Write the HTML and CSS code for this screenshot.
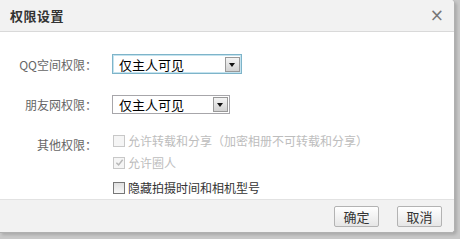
FILE: index.html
```html
<!DOCTYPE html>
<html lang="zh">
<head>
<meta charset="utf-8">
<link rel="stylesheet" href="styles.css">
</head>
<body>
<div class="dialog">
  <div class="header">
    <span class="title">权限设置</span>
    <span class="close">×</span>
  </div>
  <div class="body">
    <div class="row row1">
      <span class="label">QQ空间权限：</span>
      <div class="select focus" style="width:130px"><span class="val">仅主人可见</span><span class="arrow"></span></div>
    </div>
    <div class="row row2">
      <span class="label">朋友网权限：</span>
      <div class="select" style="width:118px"><span class="val">仅主人可见</span><span class="arrow"></span></div>
    </div>
    <div class="row row3">
      <span class="label">其他权限：</span>
      <div class="checks">
        <label class="check disabled"><span class="box"></span>允许转载和分享（加密相册不可转载和分享）</label>
        <label class="check disabled"><span class="box checked"><svg viewBox="0 0 10 10" width="9" height="9"><path d="M1.5 5.2 L4 7.6 L8.5 2" fill="none" stroke="#b8b8b8" stroke-width="1.6"/></svg></span>允许圈人</label>
        <label class="check"><span class="box"></span>隐藏拍摄时间和相机型号</label>
      </div>
    </div>
  </div>
  <div class="footer">
    <button class="btn">确定</button>
    <button class="btn">取消</button>
  </div>
</div>
</body>
</html>
```
FILE: styles.css
```css
html, body {
  margin: 0;
  padding: 0;
}
body {
  width: 460px;
  height: 239px;
  background: #c8c8c8;
  font-family: "Noto Sans CJK SC", "Liberation Sans", sans-serif;
  font-size: 12px;
  overflow: hidden;
}
.dialog {
  width: 455px;
  height: 233px;
  background: #fff;
  border-right: 1px solid #b0b0b0;
  border-bottom: 1px solid #b0b0b0;
  border-radius: 0 4px 4px 0;
  display: flex;
  flex-direction: column;
  overflow: hidden;
  box-sizing: border-box;
  box-shadow: 2px 2px 3px rgba(0,0,0,0.15);
}
.header {
  height: 31px;
  background: #f2f2f2;
  border-bottom: 1px solid #d9d9d9;
  display: flex;
  align-items: center;
  justify-content: space-between;
  padding: 0 10px 0 10px;
  flex: none;
}
.title {
  font-size: 13px;
  font-weight: bold;
  color: #333;
  letter-spacing: 0.5px;
}
.close {
  font-family: "DejaVu Sans", sans-serif;
  font-size: 17px;
  color: #777;
  line-height: 1;
}
.body {
  flex: 1;
  display: flex;
  flex-direction: column;
  padding-top: 22px;
}
.row {
  display: flex;
  align-items: center;
}
.label {
  width: 97px;
  text-align: right;
  color: #666;
  flex: none;
  margin-right: 15px;
}
.row2 {
  margin-top: 21px;
}
.row3 {
  margin-top: 19px;
  align-items: flex-start;
}
.row3 .label {
  margin-top: 3px;
}
.select {
  height: 20px;
  box-sizing: border-box;
  border: 1px solid #a7a6aa;
  display: flex;
  align-items: center;
  justify-content: space-between;
  padding: 0 1px 0 6px;
  background: #fff;
}
.select.focus {
  border: 1px solid #7eb4c9;
  box-shadow: inset 0 0 0 1px #c4e3ef;
  height: 20px;
}
.row2 .select {
  height: 19px;
}
.val {
  font-size: 13px;
  color: #000;
  line-height: 1;
}
.arrow {
  width: 15px;
  height: 15px;
  box-sizing: border-box;
  border: 1px solid #999;
  background: linear-gradient(#f4f4f4, #d2d2d2);
  position: relative;
}
.arrow::after {
  content: "";
  position: absolute;
  left: 3px;
  top: 5px;
  border-left: 3.5px solid transparent;
  border-right: 3.5px solid transparent;
  border-top: 4px solid #111;
}
.checks {
  display: flex;
  flex-direction: column;
  gap: 7px;
}
.check {
  display: flex;
  align-items: center;
  color: #333;
  height: 15px;
  line-height: 15px;
  margin-left: 1px;
}
.check.disabled {
  color: #bdbdbd;
}
.check:nth-child(3) {
  margin-top: 3px;
}
.box {
  width: 12px;
  height: 12px;
  box-sizing: border-box;
  border: 1px solid #777;
  background: linear-gradient(#e0e0e0, #f8f8f8);
  margin-right: 3px;
  display: flex;
  align-items: center;
  justify-content: center;
  flex: none;
}
.disabled .box {
  border-color: #c8c8c8;
  background: #f5f5f5;
}
.footer {
  height: 33px;
  box-sizing: border-box;
  background: #f2f2f2;
  border-top: 1px solid #e2e2e2;
  display: flex;
  align-items: center;
  justify-content: flex-end;
  gap: 18px;
  padding-right: 12px;
  flex: none;
}
.btn {
  width: 45px;
  height: 21px;
  padding: 0;
  font-family: "Noto Sans CJK SC", sans-serif;
  font-size: 13px;
  color: #333;
  border: 1px solid #b3b3b3;
  border-radius: 2px;
  background: linear-gradient(#ffffff, #e6e6e6);
  line-height: 19px;
}
```
